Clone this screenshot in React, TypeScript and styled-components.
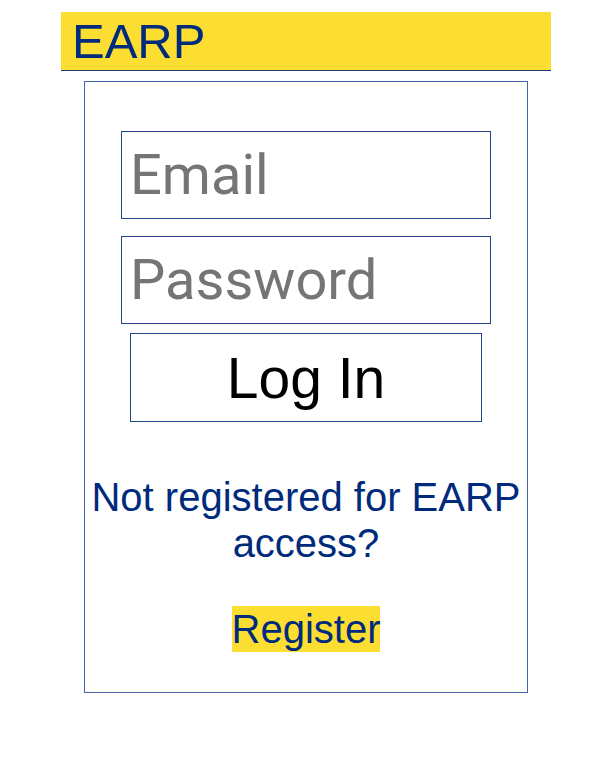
import styled, { createGlobalStyle } from "styled-components";

const GlobalStyle = createGlobalStyle`
  body {
    margin: 0;
    background: #ffffff;
    font-family: "Liberation Sans", Arial, sans-serif;
  }
`;

const Page = styled.div`
  display: flex;
  flex-direction: column;
  align-items: center;
  padding: 12px 0 0 2px;
`;

const Header = styled.header`
  width: 490px;
  height: 59px;
  box-sizing: border-box;
  background-color: #fcde33;
  border-bottom: 1px solid #1d3a80;
  padding: 0 11px;
`;

const Logo = styled.h1`
  margin: 0;
  font-family: "Liberation Sans", Arial, sans-serif;
  font-weight: normal;
  font-size: 49px;
  line-height: 58px;
  color: #002a7b;
`;

const Card = styled.main`
  width: 444px;
  box-sizing: border-box;
  margin-top: 10px;
  border: 1px solid #4465a3;
  padding: 49px 0 40px;
  display: flex;
  flex-direction: column;
  align-items: center;
`;

const Form = styled.form`
  display: flex;
  flex-direction: column;
  align-items: center;
`;

const Input = styled.input<{ $gap?: number }>`
  width: 370px;
  height: 88px;
  box-sizing: border-box;
  border: 1px solid #24448a;
  border-radius: 0;
  padding: 0 8px;
  margin: 0 0 ${(p) => p.$gap ?? 17}px;
  font-family: Roboto, "Liberation Sans", sans-serif;
  font-size: 56px;
  color: #222222;
  outline: none;

  &::placeholder {
    color: #757575;
  }
`;

const LoginButton = styled.button`
  width: 352px;
  height: 89px;
  box-sizing: border-box;
  border: 1px solid #24448a;
  background: #ffffff;
  font-family: "Liberation Sans", Arial, sans-serif;
  font-size: 57px;
  color: #000000;
  padding: 0;
  cursor: pointer;
`;

const Prompt = styled.p`
  margin: 52px 0 0;
  width: 100%;
  text-align: center;
  font-size: 40px;
  line-height: 46px;
  color: #002a7b;
`;

const RegisterRow = styled.div`
  margin-top: 40px;
  line-height: 46px;
  font-size: 40px;
`;

const RegisterLink = styled.a`
  display: inline-block;
  background-color: #fcde33;
  color: #002a7b;
  text-decoration: none;
  line-height: 46px;
  height: 46px;
  cursor: pointer;
`;

export default function App() {
  return (
    <>
      <GlobalStyle />
      <Page>
        <Header>
          <Logo>EARP</Logo>
        </Header>
        <Card>
          <Form onSubmit={(e) => e.preventDefault()}>
            <Input type="email" placeholder="Email" />
            <Input type="password" placeholder="Password" $gap={9} />
            <LoginButton type="submit">Log In</LoginButton>
          </Form>
          <Prompt>Not registered for EARP access?</Prompt>
          <RegisterRow>
            <RegisterLink href="#">Register</RegisterLink>
          </RegisterRow>
        </Card>
      </Page>
    </>
  );
}
